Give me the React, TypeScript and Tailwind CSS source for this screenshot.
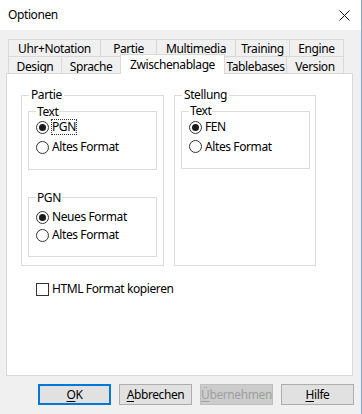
import React from 'react';

const rowOne = [
  { label: 'Uhr+Notation', w: 'w-[93px]' },
  { label: 'Partie', w: 'w-[56px]' },
  { label: 'Multimedia', w: 'w-[79px]' },
  { label: 'Training', w: 'w-[54px]' },
  { label: 'Engine', w: 'w-[54px]' },
];

const Radio = ({ label, checked, focus }: { label: string; checked?: boolean; focus?: boolean }) => (
  <div className="flex items-center h-full">
    <span className="w-[13px] h-[13px] rounded-full border border-[#333] bg-white flex items-center justify-center shrink-0">
      {checked && <span className="w-[7px] h-[7px] rounded-full bg-[#1a1a1a]" />}
    </span>
    <span className={`ml-[3px] leading-[14px] ${focus ? 'outline outline-1 outline-dotted outline-[#333]' : ''}`}>{label}</span>
  </div>
);

const Button = ({ u, rest, primary, disabled }: { u: string; rest: string; primary?: boolean; disabled?: boolean }) => (
  <button
    className={`w-[73px] h-[21px] flex items-center justify-center ${
      primary
        ? 'border-2 border-[#0078d7] bg-[#e1e1e1] text-black'
        : disabled
        ? 'border border-[#bfbfbf] bg-[#cccccc] text-[#a0a0a0]'
        : 'border border-[#adadad] bg-[#e1e1e1] text-black'
    }`}
  >
    <span className="underline underline-offset-2">{u}</span>
    {rest}
  </button>
);

export default function App() {
  return (
    <div
      className="w-[362px] h-[414px] bg-[#f0f0f0] border-r border-[#7aa7dc] flex flex-col text-[12px] text-black"
      style={{ fontFamily: '"Noto Sans", Arial, sans-serif', letterSpacing: '-0.4px' }}
    >
      {/* Title bar */}
      <div className="h-[30px] bg-white flex items-center justify-between pl-[8px] pr-[10px] shrink-0">
        <span>Optionen</span>
        <svg width="11" height="11" viewBox="0 0 11 11" className="mr-[1px]">
          <path d="M0.5 0.5 L10.5 10.5 M10.5 0.5 L0.5 10.5" stroke="#111" strokeWidth="1" />
        </svg>
      </div>

      {/* Tabs */}
      <div className="mt-[9px] ml-[6px] flex flex-col">
        <div className="ml-[2px] flex h-[17px]">
          {rowOne.map((t, i) => (
            <div
              key={t.label}
              className={`${t.w} h-[18px] border-t border-r border-b border-[#d9d9d9] ${i === 0 ? 'border-l' : ''} flex items-center justify-center pt-[1px]`}
            >
              {t.label}
            </div>
          ))}
        </div>
        <div className="ml-[2px] flex items-start h-[17px]">
          <div className="w-[54px] h-[17px] border-t border-l border-r border-[#d9d9d9] flex items-center justify-center pt-[3px]">Design</div>
          <div className="w-[59px] h-[17px] border-t border-r border-[#d9d9d9] flex items-center justify-center pt-[3px]">Sprache</div>
          <div className="relative z-10 -mt-[2px] w-[105px] -ml-px h-[20px] border-t border-l border-r border-[#d9d9d9] bg-white flex items-start justify-center pt-[1px]">
            Zwischenablage
          </div>
          <div className="w-[62px] h-[17px] border-t border-r border-[#d9d9d9] flex items-center justify-center pt-[3px]">Tablebases</div>
          <div className="w-[57px] h-[17px] border-t border-r border-[#d9d9d9] flex items-center justify-center pt-[3px]">Version</div>
        </div>

        {/* Panel */}
        <div className="w-[347px] h-[303px] bg-white border border-[#d9d9d9] flex flex-col px-[14px]">
          <div className="flex gap-[10px] mt-[13px]">
            <fieldset className="w-[143px] h-[179px] border border-[#dcdcdc] flex flex-col">
              <legend className="ml-[7px] px-[2px] leading-[16px]">Partie</legend>
              <fieldset className="ml-[6px] w-[129px] h-[66px] mt-[1px] border border-[#dcdcdc]">
                <legend className="ml-[7px] px-[1px] leading-[15px]">Text</legend>
                <div className="pl-[7px] -mt-[2px] flex flex-col">
                  <div className="h-[20px]"><Radio label="PGN" checked focus /></div>
                  <div className="h-[20px]"><Radio label="Altes Format" /></div>
                </div>
              </fieldset>
              <fieldset className="ml-[6px] w-[129px] h-[67px] mt-[20px] border border-[#dcdcdc]">
                <legend className="ml-[7px] px-[1px] leading-[15px]">PGN</legend>
                <div className="pl-[7px] mt-[3px] flex flex-col">
                  <div className="h-[18px]"><Radio label="Neues Format" checked /></div>
                  <div className="h-[18px]"><Radio label="Altes Format" /></div>
                </div>
              </fieldset>
            </fieldset>
            <fieldset className="w-[142px] h-[179px] border border-[#dcdcdc] flex flex-col">
              <legend className="ml-[7px] px-[2px] leading-[16px]">Stellung</legend>
              <fieldset className="ml-[6px] w-[129px] h-[65px] mt-[1px] border border-[#dcdcdc]">
                <legend className="ml-[7px] px-[1px] leading-[14px]">Text</legend>
                <div className="pl-[7px] -mt-px flex flex-col">
                  <div className="h-[20px]"><Radio label="FEN" checked /></div>
                  <div className="h-[19px]"><Radio label="Altes Format" /></div>
                </div>
              </fieldset>
            </fieldset>
          </div>

          <div className="flex items-center mt-[14px] ml-[15px]">
            <span className="w-[13px] h-[13px] border border-[#333] bg-white shrink-0" />
            <span className="ml-[3px]">HTML Format kopieren</span>
          </div>
        </div>
      </div>

      {/* Buttons */}
      <div className="mt-[8px] ml-[38px] flex gap-[8px]">
        <Button u="O" rest="K" primary />
        <Button u="A" rest="bbrechen" />
        <Button u="Ü" rest="bernehmen" disabled />
        <Button u="H" rest="ilfe" />
      </div>
    </div>
  );
}
